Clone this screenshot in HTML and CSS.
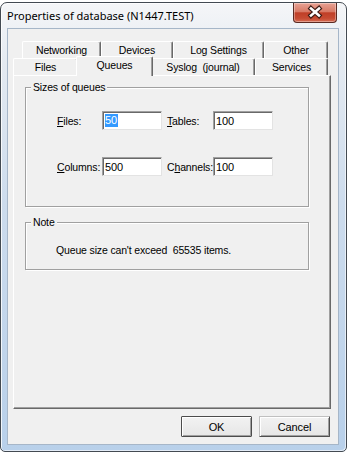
FILE: index.html
```html
<!DOCTYPE html>
<html>
<head>
<meta charset="utf-8">
<link rel="stylesheet" href="styles.css">
</head>
<body>
<div class="window">
  <div class="titlebar">
    <span class="title">Properties of database (N1447.TEST)</span>
    <div class="close">
      <svg width="44" height="20" viewBox="0 0 44 20">
        <path d="M18 6.5 L26 13.5 M26 6.5 L18 13.5" stroke="#3a1a14" stroke-width="4.8" stroke-linecap="square" fill="none"/>
        <path d="M18 6.5 L26 13.5 M26 6.5 L18 13.5" stroke="#ffffff" stroke-width="2.6" stroke-linecap="square" fill="none"/>
      </svg>
    </div>
  </div>
  <div class="client">
    <div class="tabs">
      <div class="tabrow back">
        <div class="tab t-net">Networking</div>
        <div class="tab t-dev">Devices</div>
        <div class="tab t-log">Log Settings</div>
        <div class="tab t-oth">Other</div>
      </div>
      <div class="tabrow front">
        <div class="tab t-files">Files</div>
        <div class="tab t-queues active">Queues</div>
        <div class="tab t-sys">Syslog &nbsp;(journal)</div>
        <div class="tab t-serv">Services</div>
      </div>
      <div class="panel">
        <div class="group sizes">
          <div class="group-title">Sizes of queues</div>
          <div class="fields">
            <span class="lbl"><u>F</u>iles:</span>
            <span class="edit"><span class="sel">50</span></span>
            <span class="lbl"><u>T</u>ables:</span>
            <span class="edit">100</span>
            <span class="lbl"><u>C</u>olumns:</span>
            <span class="edit">500</span>
            <span class="lbl">C<u>h</u>annels:</span>
            <span class="edit">100</span>
          </div>
        </div>
        <div class="group note">
          <div class="group-title">Note</div>
          <p class="note-text">Queue size can't exceed&nbsp; 65535 items.</p>
        </div>
      </div>
    </div>
    <div class="buttons">
      <button class="btn default">OK</button>
      <button class="btn">Cancel</button>
    </div>
  </div>
</div>
</body>
</html>
```
FILE: styles.css
```css
* { box-sizing: border-box; }
html, body { margin: 0; padding: 0; background: #ffffff; }
body {
  font-family: "Liberation Sans", Arial, sans-serif;
  font-size: 10.5px;
  letter-spacing: -0.15px;
  color: #000;
}
.window {
  width: 347px;
  height: 450px;
  margin-top: 2px;
  border: 1px solid #434a52;
  border-radius: 7px 7px 5px 5px;
  background: linear-gradient(to bottom, #f5f6f8 0, #e4eaf1 60px, #cddced 200px, #b8d0ea 100%);
  box-shadow: inset 1px 1px 0 rgba(255,255,255,0.8), inset -1px -1px 0 rgba(255,255,255,0.6);
  padding: 0 7px 6px 6px;
  display: flex;
  flex-direction: column;
}
.titlebar {
  height: 25px;
  display: flex;
  justify-content: space-between;
  align-items: flex-start;
}
.title {
  font-family: "Noto Sans", "Open Sans", sans-serif;
  font-size: 11px;
  letter-spacing: 0;
  line-height: 26px;
  color: #000;
}
.close {
  width: 44px;
  height: 20px;
  margin-right: 2px;
  border: 1px solid #5b2a22;
  border-top: none;
  border-radius: 0 0 4px 4px;
  background: linear-gradient(to bottom, #e8a294 0%, #d87a66 45%, #c03f27 52%, #c64b32 80%, #d66b53 100%);
  box-shadow: inset 0 0 0 1px rgba(255,255,255,0.35);
}
.close svg { display: block; margin: -1px 0 0 -1px; }
.client {
  flex: 1;
  border: 1px solid #a6b6c8;
  background: #f0f0f0;
  display: flex;
  flex-direction: column;
  padding: 12px 0 0 5px;
}
.tabs { width: 318px; }
.tabrow { display: flex; height: 17px; }
.tabrow.back { margin-left: 9px; }
.tab {
  height: 17px;
  border: 1px solid;
  border-color: #ffffff #696969 transparent #ffffff;
  border-bottom: none;
  border-radius: 2px 2px 0 0;
  box-shadow: inset -1px 0 0 #a0a0a0;
  background: #f0f0f0;
  display: flex;
  align-items: center;
  justify-content: center;
  white-space: nowrap;
}
.t-net { width: 79px; }
.t-dev { width: 72px; }
.t-log { width: 91px; }
.t-oth { width: 64px; }
.t-files { width: 65px; }
.t-queues { width: 73px; }
.t-sys { width: 104px; }
.t-serv { width: 73px; }
.tab.active {
  width: 77px;
  height: 20px;
  margin: -2px -2px -1px -2px;
  padding-bottom: 3px;
  position: relative;
  z-index: 1;
}
.panel {
  height: 334px;
  border: 1px solid;
  border-color: #ffffff #696969 #696969 #ffffff;
  box-shadow: inset -1px -1px 0 #a0a0a0;
  padding: 11px 0 0 11px;
}
.group {
  width: 284px;
  border: 1px solid #a0a0a0;
  box-shadow: 1px 1px 0 #ffffff, inset 1px 1px 0 #ffffff;
}
.group-title {
  display: table;
  line-height: 12px;
  margin: -7px 0 0 5px;
  padding: 0 2px;
  background: #f0f0f0;
}
.sizes { height: 120px; }
.note { height: 48px; margin-top: 15px; }
.fields {
  display: grid;
  grid-template-columns: 45px 65px 46px 60px;
  grid-auto-rows: 19px;
  row-gap: 27px;
  align-items: center;
  margin: 18px 0 0 31px;
}
.lbl { white-space: nowrap; }
.edit {
  width: 60px;
  height: 19px;
  background: #ffffff;
  border: 1px solid;
  border-color: #a0a0a0 #e3e3e3 #e3e3e3 #a0a0a0;
  box-shadow: inset 1px 1px 0 #696969;
  padding-left: 2px;
  display: flex;
  align-items: center;
  font-size: 11px;
}
.sel {
  background: #3399ff;
  color: #ffffff;
  line-height: 13px;
  padding-right: 1px;
}
.note-text {
  margin: 16px 0 0 30px;
  line-height: 12px;
}
.buttons {
  display: flex;
  justify-content: flex-end;
  gap: 7px;
  margin-top: 7px;
  padding-right: 8px;
}
.btn {
  width: 71px;
  height: 21px;
  font-family: "Liberation Sans", Arial, sans-serif;
  font-size: 11px;
  letter-spacing: -0.15px;
  color: #000;
  background: linear-gradient(to bottom, #f2f2f2, #e6e6e6);
  border: 1px solid;
  border-color: #c0c0c0 #505050 #505050 #c0c0c0;
  border-radius: 1px;
  box-shadow: inset 1px 1px 0 #ffffff, inset -1px -1px 0 #a0a0a0;
  padding: 0;
}
.btn.default {
  border-color: #4c4c4c;
}
```
